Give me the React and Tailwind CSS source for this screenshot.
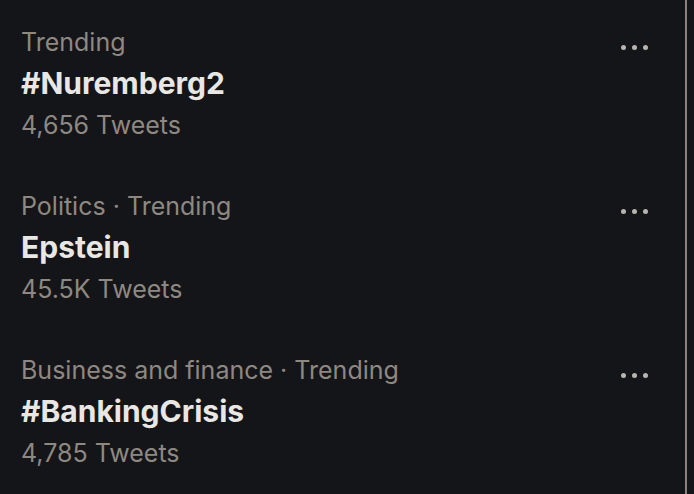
import React from 'react';

const trends = [
  { meta: 'Trending', name: '#Nuremberg2', count: '4,656 Tweets' },
  { meta: 'Politics · Trending', name: 'Epstein', count: '45.5K Tweets' },
  { meta: 'Business and finance · Trending', name: '#BankingCrisis', count: '4,785 Tweets' },
];

function MoreDots() {
  return (
    <div className="flex items-center gap-[6px] mt-[23px] h-[6px]">
      <span className="w-[5px] h-[5px] rounded-full bg-[#b9b4ae]" />
      <span className="w-[5px] h-[5px] rounded-full bg-[#b9b4ae]" />
      <span className="w-[5px] h-[5px] rounded-full bg-[#b9b4ae]" />
    </div>
  );
}

export default function App() {
  return (
    <div className="w-[694px] h-[494px] bg-[#141519] flex overflow-hidden" style={{ fontFamily: 'Inter, "Noto Sans", sans-serif' }}>
      <div className="w-[685px] flex flex-col pt-[21px]">
        {trends.map((t) => (
          <div key={t.name} className="flex shrink-0 justify-between pl-[21px] pr-[37px] h-[164px]">
            <div className="flex flex-col">
              <span className="text-[25px] leading-[42px] text-[#8e8881]">{t.meta}</span>
              <span className="text-[30px] leading-[40px] font-bold text-[#e9e7e3]">{t.name}</span>
              <span className="text-[25px] leading-[44px] text-[#8e8881]">{t.count}</span>
            </div>
            <MoreDots />
          </div>
        ))}
      </div>
      <div className="w-[2px] h-full bg-[#8a817a]" />
    </div>
  );
}
